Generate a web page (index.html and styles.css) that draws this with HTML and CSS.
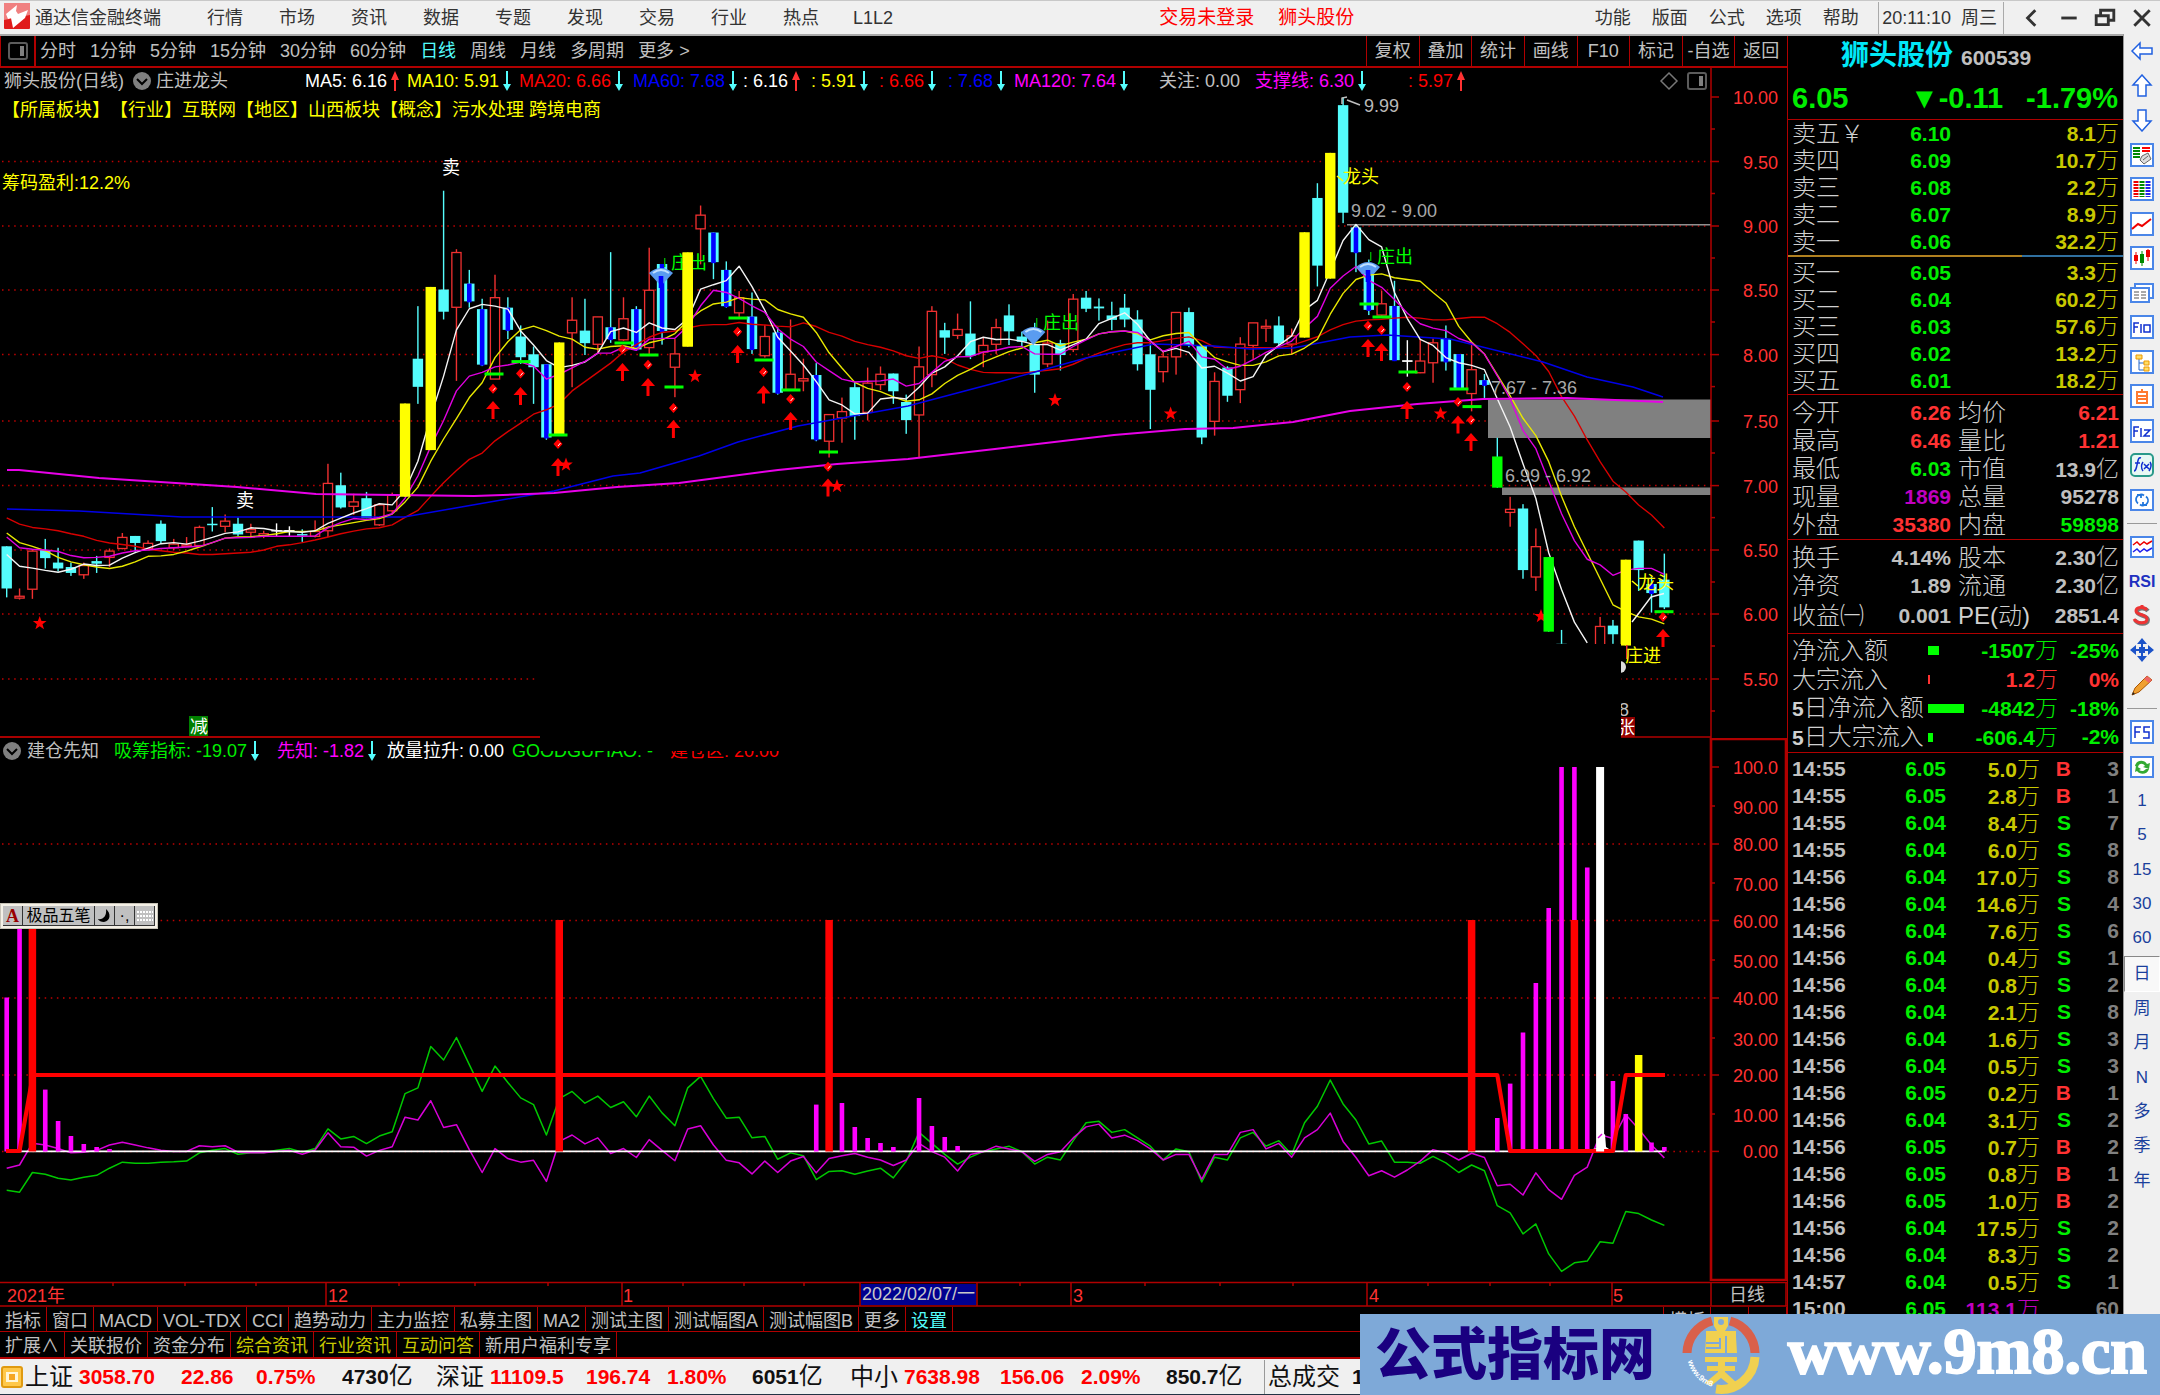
FILE: index.html
```html
<!DOCTYPE html>
<html lang="zh-CN">
<head>
<meta charset="utf-8">
<title>通达信金融终端</title>
<link rel="stylesheet" href="styles.css">
</head>
<body>
<svg class="defs" aria-hidden="true">
  <symbol id="up" viewBox="0 0 10 22"><path d="M5 1l4 9H6v11H4V10H1z" fill="#ff3232"/></symbol>
  <symbol id="down" viewBox="0 0 10 22"><path d="M5 21l4-7H6V1H4v13H1z" fill="#54fcfc"/></symbol>
  <symbol id="chev" viewBox="0 0 20 20"><circle cx="10" cy="10" r="9" fill="#808080"/><path d="M5 8l5 5 5-5" fill="none" stroke="#000" stroke-width="2"/></symbol>
  <symbol id="pane" viewBox="0 0 20 18"><rect x="1" y="1" width="18" height="16" rx="2" fill="none" stroke="#5c5c5c" stroke-width="2"/><rect x="12" y="4" width="4" height="10" fill="#808080"/></symbol>
</svg>

<header class="titlebar">
  <svg class="logo" viewBox="0 0 26 26"><rect width="26" height="26" rx="1" fill="#e01b1b"/><path d="M0 0h26v12L0 17z" fill="#f08080"/><path d="M13 2L2 11l2 5 3-1 2 10 12-10 3-8-10 4-2-3z" fill="#fff"/></svg>
  <h1>通达信金融终端</h1>
  <nav class="menu">
    <button>行情</button><button>市场</button><button>资讯</button><button>数据</button><button>专题</button><button>发现</button><button>交易</button><button>行业</button><button>热点</button><button>L1L2</button>
  </nav>
  <div class="login"><a href="#">交易未登录</a><a href="#">狮头股份</a></div>
  <nav class="menu menu-r"><button>功能</button><button>版面</button><button>公式</button><button>选项</button><button>帮助</button></nav>
  <div class="clock"><span>20:11:10</span><span>周三</span></div>
  <div class="win">
    <button aria-label="收起"><svg viewBox="0 0 20 20"><path d="M13 3L6 10l7 7"/></svg></button>
    <button aria-label="最小化"><svg viewBox="0 0 20 20"><path d="M3 10h14"/></svg></button>
    <button aria-label="还原"><svg viewBox="0 0 20 20"><path d="M2 8h11v8H2zM6 7V3h12v9h-4"/></svg></button>
    <button aria-label="关闭"><svg viewBox="0 0 20 20"><path d="M3 3l14 14M17 3L3 17"/></svg></button>
  </div>
</header>

<main class="work">
  <section class="left">
    <div class="toolbar">
      <button class="pane" aria-label="侧栏"><svg viewBox="0 0 20 18"><use href="#pane"/></svg></button>
      <div class="periods">
        <button>分时</button><button>1分钟</button><button>5分钟</button><button>15分钟</button><button>30分钟</button><button>60分钟</button><button class="on">日线</button><button>周线</button><button>月线</button><button>多周期</button><button>更多 &gt;</button>
      </div>
      <div class="tools"><button>复权</button><button>叠加</button><button>统计</button><button>画线</button><button>F10</button><button>标记</button><button>-自选</button><button>返回</button></div>
    </div>

    <div class="chart">
      <svg id="kline" viewBox="0 68 1787 670" role="img" aria-label="狮头股份日线"></svg>
      <div class="notes">
        <div class="info">
          <span class="name">狮头股份(日线)<svg class="chev"><use href="#chev"/></svg>庄进龙头</span>
          <span class="white">MA5: 6.16<svg><use href="#up"/></svg></span>
          <span class="yellow">MA10: 5.91<svg><use href="#down"/></svg></span>
          <span class="red">MA20: 6.66<svg><use href="#down"/></svg></span>
          <span class="blue">MA60: 7.68<svg><use href="#down"/></svg></span>
          <span class="white">: 6.16<svg><use href="#up"/></svg></span>
          <span class="yellow">: 5.91<svg><use href="#down"/></svg></span>
          <span class="red">: 6.66<svg><use href="#down"/></svg></span>
          <span class="blue">: 7.68<svg><use href="#down"/></svg></span>
          <span class="mag">MA120: 7.64<svg><use href="#down"/></svg></span>
          <span>关注: 0.00</span>
          <span class="mag">支撑线: 6.30<svg><use href="#down"/></svg></span>
          <span class="red">: 5.97<svg><use href="#up"/></svg></span>
          <span class="corner"><svg class="dia" viewBox="0 0 20 20"><path d="M10 2l8 8-8 8-8-8z"/></svg><svg class="pn"><use href="#pane"/></svg></span>
        </div>
        <p class="yellow">【所属板块】【行业】互联网【地区】山西板块【概念】污水处理 跨境电商</p>
        <p class="yellow chips">筹码盈利:12.2%</p>
      </div>
    </div>

    <div class="chart">
      <svg id="osc" viewBox="0 738 1787 543" role="img" aria-label="建仓先知"></svg>
      <div class="notes">
        <div class="info2">
          <span class="name"><svg class="chev"><use href="#chev"/></svg>建仓先知</span>
          <span class="green">吸筹指标: -19.07<svg><use href="#down"/></svg></span>
          <span class="mag">先知: -1.82<svg><use href="#down"/></svg></span>
          <span class="white">放量拉升: 0.00</span>
          <span class="green">GOODGUPIAO: -</span>
          <span class="red">建仓区: 20.00</span>
        </div>
      </div>
      <div class="shade"></div>
      <div class="ime">
        <button class="a">A</button><button class="t">极品五笔</button><button aria-label="半角"><svg viewBox="0 0 16 16"><path d="M9 1c5 4 5 12-2 13-3 0-5-1-6-3 5 1 9-3 8-10z"/></svg></button><button>·,</button><button aria-label="软键盘"><svg viewBox="0 0 16 16"><path d="M0 4h16M0 8h16M0 12h16" stroke="#fff" stroke-width="2" stroke-dasharray="2 1"/></svg></button>
      </div>
    </div>

    <svg id="dates" class="dates" viewBox="0 1281 1787 26" role="img" aria-label="日期轴"></svg>

    <div class="tabs">
      <button>指标</button><button>窗口</button><button>MACD</button><button>VOL-TDX</button><button>CCI</button><button>趋势动力</button><button>主力监控</button><button>私募主图</button><button>MA2</button><button>测试主图</button><button>测试幅图A</button><button>测试幅图B</button><button>更多</button><button class="on">设置</button>
      <div class="tpl"><button>模板</button><button>+</button><button>-</button></div>
    </div>
    <div class="tabs">
      <button>扩展∧</button><button>关联报价</button><button>资金分布</button><button class="hot">综合资讯</button><button class="hot">行业资讯</button><button class="hot">互动问答</button><button>新用户福利专享</button>
    </div>
  </section>

  <aside class="quote">
    <div class="head">
      <div class="title"><h2>狮头股份</h2><span>600539</span></div>
      <div class="price"><span>6.05</span><span>▼-0.11</span><span>-1.79%</span></div>
    </div>
    <table class="book" id="sell"></table>
    <div class="ratio"></div>
    <table class="book buy" id="buy"></table>
    <table class="stats" id="stats"></table>
    <table class="stats last" id="stats2"></table>
    <table class="flow" id="flow"></table>
    <table class="ticks" id="ticks"></table>
  </aside>

  <nav class="side">
    <div class="grp g14">
      <button aria-label="后退"><svg viewBox="0 0 24 24"><path class="ar" d="M2 12l8-8v5h12v6H10v5z"/></svg></button>
      <button aria-label="上"><svg viewBox="0 0 24 24"><path class="ar" d="M12 1l9 10h-5v11H8V11H3z"/></svg></button>
      <button aria-label="下"><svg viewBox="0 0 24 24"><path class="ar" d="M12 23l9-10h-5V2H8v11H3z"/></svg></button>
      <button aria-label="报价"><svg viewBox="0 0 24 24"><path class="bx" d="M1 1h22v22H1z"/><path d="M3 5h7M3 8h7M3 11h7M3 14h7" stroke="#080" stroke-width="2"/><path d="M12 5h8M12 8h8" stroke="#f00" stroke-width="2"/><path d="M10 17l4 4 7-5-3-6-6 3zM13 17l5-4" fill="#ddd" stroke="#666"/></svg></button>
      <button aria-label="列表"><svg viewBox="0 0 24 24"><path class="bx" d="M1 1h22v22H1z"/><g stroke-width="5" stroke-dasharray="2 1"><path d="M6 4v16" stroke="#e00"/><path d="M12 4v16" stroke="#080"/><path d="M18 4v16" stroke="#22e"/></g></svg></button>
      <button aria-label="走势"><svg viewBox="0 0 24 24"><path class="bx" d="M1 1h22v22H1z"/><path d="M2 17l6-5 4 2 9-7" stroke="#e00" stroke-width="2" fill="none"/></svg></button>
      <button aria-label="K线"><svg viewBox="0 0 24 24"><path class="bx" d="M1 1h22v22H1z"/><path d="M6 6v12M18 3v12" stroke="#e00"/><path d="M4 9h4v6H4zM16 4h4v7h-4z" fill="#e00"/><path d="M12 5v15" stroke="#080"/><path d="M10 8h4v9h-4z" fill="#080"/></svg></button>
      <button aria-label="多窗"><svg viewBox="0 0 24 24"><path class="bx" d="M5 3h18v14H5z"/><path class="bx" d="M1 7h18v14H1z"/><path d="M4 11h5M4 14h5M4 17h5M11 11h5M11 14h5M11 17h5" stroke="#555"/></svg></button>
      <button aria-label="F10"><svg viewBox="0 0 24 24"><path class="bx" d="M1 1h22v22H1z"/><path class="gl" d="M4 18V8h5M4 12h4M11 9v9M14 10h6v7h-6z"/></svg></button>
      <button aria-label="树"><svg viewBox="0 0 24 24"><path class="bx" d="M1 1h22v22H1z"/><path d="M9 8v12h6M9 13h6" stroke="#26c" fill="none"/><path d="M6 5h6v4H6zM14 11h5v4h-5zM14 17h5v4h-5z" fill="#fd6" stroke="#e90"/></svg></button>
      <button aria-label="自选"><svg viewBox="0 0 24 24"><path class="bx" d="M1 1h22v22H1z"/><path d="M7 8h10v11H7zM7 12h10M7 15h10M12 8V5" stroke="#ff7a30" stroke-width="2" fill="#fff"/></svg></button>
      <button aria-label="F12"><svg viewBox="0 0 24 24"><path class="bx" d="M1 1h22v22H1z"/><path class="gl" d="M4 18V8h5M4 12h4M11 9v9M14 11h6l-6 6h6"/></svg></button>
      <button aria-label="公式"><svg viewBox="0 0 24 24"><rect class="bx2" x="1" y="1" width="22" height="22" rx="4"/><path class="gl" d="M11 5c-3-1-3 3-4 7s-1 6-3 6M5 10h5M13 9c-2 3-2 6 0 9M20 9c2 3 1 6-1 9M14 11l5 5M19 11l-5 5"/></svg></button>
      <button aria-label="循环"><svg viewBox="0 0 24 24"><path class="bx" d="M1 2h22v20H1z"/><path d="M8 15.500a5 5 0 0 1 6-8M16 8.500a5 5 0 0 1-6 8M7 7h4v3M17 17h-4v-3" stroke="#27d" stroke-width="1.800" fill="none"/></svg></button>
    </div>
    <hr>
    <div class="grp g5">
      <button aria-label="叠线"><svg viewBox="0 0 24 24"><path class="bx" d="M1 2h22v20H1z"/><path d="M3 10l4-3 3 3 4-3 3 2 5-3" stroke="#e00" fill="none" stroke-width="1.500"/><path d="M3 17l4-3 3 3 4-3 3 2 5-3" stroke="#22e" fill="none" stroke-width="1.500"/></svg></button>
      <button class="rsi">RSI</button>
      <button aria-label="资金"><svg viewBox="0 0 24 24"><path d="M18 7c-3-4-11-3-11 1s11 3 11 8-10 5-13 0" stroke="#777" stroke-width="4" fill="none"/><path d="M17 6c-3-4-11-3-11 1s11 3 11 8-10 5-13 0M12 1v3" stroke="#e33" stroke-width="3" fill="none"/></svg></button>
      <button aria-label="移动"><svg viewBox="0 0 24 24"><path d="M12 0l5 6H7zM12 24l5-6H7zM0 12l6-5v10zM24 12l-6-5v10zM9 9h6v6H9z" fill="#1c53c8"/><path d="M12 5v14M5 12h14" stroke="#1c53c8" stroke-width="2"/></svg></button>
      <button aria-label="画笔"><svg viewBox="0 0 24 24"><path d="M2 22l3-7L17 3l5 4L9 19z" fill="#f0a030" stroke="#a50"/><path d="M17 3l5 4-3 3-5-4z" fill="#e66"/><path d="M2 22l3-1-2-2z" fill="#222"/></svg></button>
    </div>
    <hr>
    <div class="grp g14">
      <button aria-label="F5"><svg viewBox="0 0 24 24"><path class="bx" d="M1 1h22v22H1z"/><path class="gl" d="M5 18V7h6M5 12h5M20 7h-6v5h5v6h-6"/></svg></button>
      <button aria-label="刷新"><svg viewBox="0 0 24 24"><path class="bx" d="M1 2h22v20H1z"/><path d="M5 11c1-6 9-7 12-2l3-1-1 6-6-2 2-1c-2-3-6-3-7 1zM19 14c-2 6-9 6-12 2l-2 1 1-6 5 3-2 1c3 2 5 1 7-1z" fill="#3a3"/></svg></button>
      <button>1</button><button>5</button><button>15</button><button>30</button><button>60</button><button class="down">日</button><button>周</button><button>月</button><button>N</button><button>多</button><button>季</button><button>年</button>
    </div>
  </nav>
</main>

<footer class="status">
  <svg class="sic" viewBox="0 0 22 22"><rect x="1" y="1" width="20" height="20" rx="2" fill="#ffc84a" stroke="#e09a10" stroke-width="2"/><path d="M5 6h12v10H5z" fill="#fff6d8"/><path d="M8 8h6v6H8z" fill="#f5a623"/></svg>
  <div class="idx first"><span>上证</span><b>3058.70</b><b>22.86</b><b>0.75%</b><em><strong>4730</strong>亿</em></div>
  <div class="idx"><span>深证</span><b>11109.5</b><b>196.74</b><b>1.80%</b><em><strong>6051</strong>亿</em></div>
  <div class="idx"><span>中小</span><b>7638.98</b><b>156.06</b><b>2.09%</b><em><strong>850.7</strong>亿</em></div>
  <div class="total"><span>总成交</span><strong>1</strong></div>
</footer>

<div class="banner">
  <span class="cn">公式指标网</span>
  <svg viewBox="0 0 78 78"><path d="M5 37A34 34 0 0 1 30 5" fill="none" stroke="#d9604a" stroke-width="9"/><path d="M73 37A34 34 0 0 0 48 5" fill="none" stroke="#d9604a" stroke-width="9"/><path d="M73 41A34 34 0 0 1 34 73" fill="none" stroke="#f0d050" stroke-width="9"/><path d="M32 1h14v9l-3 5h11v6l1 16H23l1-16v-6h11l-3-5z" fill="#f0d050"/><circle cx="39" cy="6" r="3" fill="#7ea9d8"/><path d="M24 27h14v-5M38 27v5H24M44 20v17" stroke="#7ea9d8" stroke-width="2" fill="none"/><path d="M23 41h32v5H23zM25 50h28v5H25zM36 44h7v12l12 11-6 3-10-8-10 8-6-3 13-11z" fill="#f0d050"/><path id="arc" d="M6 45A35 35 0 0 0 31 71" fill="none"/><text class="mini"><textPath href="#arc">www.9m8.cn</textPath></text></svg>
  <span class="url">www.9m8.cn</span>
</div>
<script src="app.js"></script>
</body>
</html>
```
FILE: styles.css
```css
* { box-sizing: border-box; }
body {
  margin: 0;
  background: #000;
  color: #c0c0c0;
  font: 400 18px/24px "Liberation Sans", "Noto Sans CJK SC", sans-serif;
  text-spacing-trim: space-all;
  display: flex;
  flex-direction: column;
  min-height: 100vh;
  position: relative;
  overflow-x: hidden;
}
button {
  font: inherit;
  color: inherit;
  background: none;
  border: 0;
  padding: 0;
  white-space: nowrap;
}
h1, h2, p { margin: 0; font-size: 18px; font-weight: 400; }
a { color: inherit; text-decoration: none; }
.defs { display: none; }
.white { color: #fff; }
.yellow { color: #ff0; }
.red { color: #f00; }
.blue { color: #00f; }
.mag { color: #f0f; }
.green { color: #0e0; }

/* title bar */
.titlebar {
  height: 36px;
  flex: none;
  display: flex;
  align-items: center;
  background: #f0f0f0;
  border-top: 1px solid #c8c8c8;
  border-bottom: 2px solid #a8a8a8;
  color: #333;
  padding-left: 4px;
  white-space: nowrap;
}
.logo { width: 26px; height: 26px; margin-bottom: 4px; }
.titlebar h1 { margin: 0 28px 0 5px; }
.menu { display: flex; }
.menu button { width: 72px; }
.login { color: #f00; font-size: 19px; display: flex; gap: 24px; margin-left: auto; }
.menu-r { margin-left: 230px; }
.menu-r button { width: 57px; }
.clock {
  border: solid #aaa;
  border-width: 0 1px;
  height: 32px;
  display: flex;
  align-items: center;
  gap: 10px;
  padding: 0 6px 0 3px;
  margin-left: 9px;
}
.win { display: flex; width: 156px; padding-left: 10px; justify-content: space-around; }
.win svg { width: 22px; height: 22px; display: block; fill: none; stroke: #333; stroke-width: 2.6; }

/* work area */
.work { display: grid; grid-template-columns: minmax(0, 1fr) 336px 37px; flex: 1; }
.left { min-width: 0; }
.toolbar {
  height: 32px;
  display: flex;
  align-items: stretch;
  border-bottom: 2px solid #b00000;
}
.pane { width: 36px; border: solid #b00000; border-width: 0 2px 0 1px; }
.pane svg { width: 20px; height: 18px; display: block; margin: auto; }
.periods { display: flex; gap: 14px; padding-left: 4px; }
.on { color: #54fcfc; }
.tools { margin-left: auto; width: 421px; display: flex; }
.tools button { flex: 1; border-left: 1px solid #b00000; }

.chart { display: grid; position: relative; }
.chart > svg, .notes { grid-area: 1 / 1; }
.chart > svg, .dates { display: block; width: 100%; height: auto; }
.notes { position: relative; z-index: 2; white-space: nowrap; }
.info, .info2 { display: grid; height: 26px; align-items: center; }
.info { grid-template-columns: 305px 102px 112px 114px 110px 68px 68px 69px 66px 145px 96px 153px 251px 1fr; }
.info2 { grid-template-columns: 114px 163px 110px 125px 158px 1fr; }
.info span, .info2 span { display: flex; align-items: center; }
.info svg, .info2 svg { width: 10px; height: 22px; margin-left: 3px; }
.info .name, .info2 .name { padding-left: 4px; }
.info2 .name { padding-left: 1px; }
.notes .chev { width: 20px; height: 20px; margin: 0 4px 0 8px; }
.info2 .name .chev { margin: 0 5px 0 1px; }
.info .corner svg { width: 20px; height: 20px; margin: 0 8px 0 0; }
.dia { fill: none; stroke: #777; stroke-width: 1.5; }
.notes p { padding: 4px 0 0 2px; }
.notes .chips { padding-top: 49px; }
.shade {
  position: absolute;
  z-index: 3;
  left: 30.2%;
  right: 9.3%;
  top: -94px;
  height: 107px;
  background: #000;
}
.ime {
  position: absolute;
  z-index: 4;
  left: 0;
  top: 165px;
  width: 158px;
  height: 26px;
  padding: 2px;
  display: flex;
  background: #f4f0e6;
  border: 1px solid #c8c4b8;
  color: #000;
  font-size: 16px;
  line-height: 20px;
}
.ime button { flex: 1; background: #c0c0c0; border-right: 1px solid #333; border-bottom: 1px solid #333; }
.ime .t { flex: 0 0 72px; }
.ime .a { font-family: "Liberation Serif", serif; font-weight: 700; color: #900; font-size: 18px; }
.ime svg { width: 16px; height: 16px; display: block; margin: auto; }

/* svg text */
svg text { font: 400 18px "Liberation Sans", "Noto Sans CJK SC", sans-serif; }
svg .ax { fill: #ff3232; text-anchor: end; }

.tabs { height: 25px; display: flex; border-bottom: 1px solid #b00000; }
.tabs + .tabs { height: 27px; border-bottom-width: 2px; }
.tabs button { border-right: 1px solid #b00000; padding: 2px 5px 0; }
.tpl { margin-left: auto; display: flex; border-left: 1px solid #b00000; }
.tpl button { min-width: 38px; }
.hot { color: #c8c800; }

/* quote panel */
.quote {
  border-left: 1px solid #b00000;
  font-size: 21px;
  font-weight: 700;
  min-width: 0;
}
.head { height: 84px; border-bottom: 1px solid #b00000; }
.title { display: flex; align-items: baseline; gap: 8px; padding: 2px 0 0 53px; line-height: 36px; }
.title h2 { font-size: 28px; font-weight: 700; color: #00e8f8; }
.price { display: grid; grid-template-columns: 118px auto 1fr; padding: 4px 5px 0 4px; font-size: 29px; line-height: 36px; color: #0e0; }
.price span:last-child { text-align: right; }
.quote table { width: 100%; border-collapse: collapse; table-layout: fixed; }
.quote td, .quote th { padding: 0; text-align: right; height: 27px; line-height: 26px; white-space: nowrap; font-weight: 700; }
.quote th { text-align: left; font-weight: 300; font-size: 24px; padding-left: 4px; color: #d0d0d0; }
.quote i { font-style: normal; font-weight: 300; font-size: 23px; }
.quote .up { color: #ff3232; }
.quote .dn { color: #0e0; }
.vol { color: #c8c800; }
.pu { color: #c000c0; }
.mute { color: #808080; }
.c1 { width: 80px; } .c2 { width: 83px; } .c3 { width: 80px; } .c0 { width: 4px; }
.quote .lab2 { padding-left: 7px; }
.book .p { width: 83px; }
.ratio { height: 2px; background: linear-gradient(90deg, #b08020 70%, #3070a0 70%); }
.quote .buy { margin: 2px 0 0; }
.buy, .stats, .flow { border-bottom: 1px solid #b00000; }
.quote .stats td, .quote .stats th { height: 28px; }
.quote .flow td, .quote .flow th { height: 29px; }
.stats { margin-top: 4px; }
.stats.last tr:last-child td, .stats.last tr:last-child th { height: 34px; }
.flow { margin-top: 2px; }
.flow svg { display: block; width: 40px; height: 9px; }
.flow .lead { font-weight: 700; font-size: 21px; }
.f1 { width: 140px; } .f2 { width: 40px; } .f3 { width: 90px; }
.t2 { width: 78px; } .t3 { width: 94px; } .t4 { width: 31px; }
.quote .ticks { margin-top: 3px; }
.quote .ticks th { font-weight: 700; font-size: 21px; color: #c0c0c0; }

/* side tool strip */
.side { background: #f0f0f0; color: #1a3f9c; border-left: 1px solid #999; font-size: 17px; margin-top: -2px; }
.grp { display: flex; flex-direction: column; }
.g14 { height: 483px; }
.g5 { height: 172px; }
.grp button { flex: 1; min-height: 0; }
.grp svg { width: 24px; height: 24px; display: block; margin: auto; }
.side hr { border: 0; border-top: 1px solid #999; margin: 6px 3px; }
.ar { fill: #fff; stroke: #2060e0; stroke-width: 1.5; }
.bx { fill: #fff; stroke: #4a86e8; stroke-width: 2; }
.bx2 { fill: #e8f8f4; stroke: #2a9a8a; stroke-width: 2; }
.gl { fill: none; stroke: #1030d0; stroke-width: 1.5; }
.side .rsi { font-weight: 700; font-size: 16px; color: #2030c0; }
.side .down { border: 1px solid #999; border-color: #888 #fff #fff #888; background: #f8f8f8; }

/* status bar */
.status {
  height: 36px;
  flex: none;
  background: #f0f0f0;
  border-bottom: 1px solid #234;
  display: flex;
  align-items: center;
  color: #111;
  font-size: 24px;
  white-space: nowrap;
  overflow: hidden;
}
.sic { width: 22px; height: 22px; margin: 0 2px 0 1px; flex: none; }
.idx { display: grid; grid-template-columns: 54px 96px 81px 85px 98px; align-items: center; flex: none; }
.idx.first { grid-template-columns: 54px 102px 75px 86px 94px; }
.status b { font-size: 21px; font-weight: 700; color: #f00; }
.status strong { font-size: 21px; font-weight: 700; }
.status em { font-style: normal; }
.total { border-left: 1px solid #999; padding-left: 3px; line-height: 34px; display: flex; gap: 12px; }

/* site banner */
.banner {
  position: absolute;
  z-index: 9;
  right: 0;
  bottom: 0;
  width: 800px;
  height: 81px;
  background: #7ea9d8;
  display: flex;
  align-items: center;
  padding: 0 13px 0 15px;
  justify-content: space-between;
}
.cn { color: #1a0080; font-size: 56px; font-weight: 900; line-height: 80px; }
.banner svg { width: 78px; height: 78px; }
.url { font: 700 66px/70px "Liberation Serif", serif; color: #fff; -webkit-text-stroke: 2px #fff; padding-bottom: 8px; }
svg .mini { font: 700 8px "Liberation Sans", sans-serif; fill: #fff; }
```
FILE: app.js
```js
const NS = 'http://www.w3.org/2000/svg';
const $ = id => document.getElementById(id);
const X = i => 6.7 + 12.85 * i;
let out = [];
const rect = (x, y, w, h, f, extra = '') => out.push(`<rect x="${x}" y="${y}" width="${w}" height="${h}" fill="${f}" ${extra}/>`);
const line = (x1, y1, x2, y2, c, w = 1, extra = '') => out.push(`<path d="M${x1} ${y1}L${x2} ${y2}" stroke="${c}" stroke-width="${w}" fill="none" ${extra}/>`);
const text = (x, y, s, c, extra = '') => out.push(`<text x="${x}" y="${y}" fill="${c}" ${extra}>${s}</text>`);
const poly = (pts, c, w) => out.push(`<polyline points="${pts.map(p => p.join()).join(' ')}" fill="none" stroke="${c}" stroke-width="${w}" stroke-linejoin="round"/>`);
const RED = '#b00000', CY = '#54fcfc';
const dotted = (y, x1, x2) => line(x1, y, x2, y, '#c00000', 1.5, 'stroke-dasharray="1.5 4.6"');

/* Series are stored in blocks; each block has its first bar, base line and unit height. */
const A = [0, 180, 0.37], B = [48, 180, 0.37], C = [94, 80, 0.4337];
const join = (...blocks) => {
  const r = [];
  for (const [[first, base, unit], ys] of blocks) ys.forEach((y, k) => r.push([X(first + k), base + y * unit]));
  return r;
};

/* kind, high, top, bottom, low */
const candles = [
[A, `c 990 990 1104 1128|r 1104 1125 1130 1134|r 998 1003 1106 1132|c 970 1000 1022 1050|c 994 1034 1050 1058|c 1034 1046 1062 1070|r 1034 1042 1067 1078|c 1016 1030 1037 1062|r 996 1003 1020 1046|r 954 966 996 998|c 962 962 981 1005|r 974 982 996 998|c 920 929 976 984|r 970 984 994 1000|r 965 986 990 992|r 934 939 988 990|c 884 929 933 950|r 904 922 936 952|c 912 929 958 962|r 929 945 952 968|r 948 956 962 968|w 928 946 950 962|w 936 946 950 962|c 944 957 961 978|r 920 950 963 966|r 767 820 948 965|c 791 825 885 888|r 848 870 882 905|c 843 860 914 914|r 875 878 932 935|r 845 852 894 900|y 604 604 856 856|c 341 483 559 605|y 289 289 730 730|c 29 296 356 377|r 187 196 344 543|b 243 280 328 345|b 321 349 499 503|r 256 318 538 538|b 317 345 405 430|c 393 423 479 497|c 450 471 506 605|b 498 498 696 702|y 439 439 688 688|r 317 379 413 560|c 321 407 441 473|r 370 370 444 470|b 195 398 430 440`],
[B, `r 317 375 432 435|b 341 349 458 462|r 183 298 453 470|b 227 227 408 445|r 430 470 506 587|y 196 196 450 450|r 69 95 132 228|b 142 142 222 268|b 220 243 341 345|r 300 318 359 375|b 304 369 457 470|r 392 423 475 480|b 398 412 575 580|r 377 525 566 566|r 483 537 543 571|b 495 527 701 706|r 634 634 706 750|r 588 626 643 710|c 545 560 638 702|r 507 549 628 650|r 504 525 553 568|c 523 523 571 605|c 580 600 649 686|r 450 505 635 752|r 341 355 526 560|c 386 406 426 470|r 361 404 420 430|c 328 415 475 484|r 424 447 465 506|r 375 399 444 470|c 336 366 409 446|c 410 423 437 450|c 386 446 526 575|r 380 441 497 506|c 432 441 473 515|r 308 322 458 465|c 300 318 348 357|c 320 342 347 380|c 329 366 378 406|c 308 345 377 398|c 352 377 498 515|c 441 471 567 673|r 460 478 518 547|r 358 358 478 526|c 345 357 446 452|c 446 446 696 714`],
[C, `r 674 695 787 820|c 660 663 728 742|r 593 609 714 745|r 560 560 612 644|r 552 568 572 604|c 545 566 607 612|r 573 590 609 634|y 351 351 594 594|c 238 272 428 476|y 168 168 458 458|c 40 58 306 330|b 333 340 397 443|b 414 435 530 542|r 486 516 542 546|b 463 521 646 648|w 600 646 650 684|r 597 648 675 676|r 596 606 652 698|b 566 597 649 670|b 632 632 710 714|r 610 668 723 764|b 678 692 703 733|g 825 868 940 940|r 961 990 997 1030|c 978 988 1130 1150|r 1034 1076 1146 1178|g 1100 1100 1272 1272|c 1268 1300 1300 1300|n 0 0 0 0|n 0 0 0 0|r 1238 1260 1302 1302|c 1245 1258 1278 1300|y 1106 1106 1304 1304|c 1062 1062 1130 1178|b 1145 1162 1183 1228|c 1092 1152 1216 1220`]
];
const bars = [];
candles.forEach(([[first, base, unit], src]) => src.split('|').forEach((r, k) => {
  const p = r.split(' ');
  if (p[0] !== 'n') bars.push([first + k, p[0], ...p.slice(1).map(v => base + v * unit)]);
}));
function drawBar([i, k, hi, top, bot, lo]) {
  const x = X(i), col = { c: CY, b: CY, r: '#f03030', y: '#ff0', g: '#0f0', w: '#fff' }[k];
  const h = Math.max(1.5, bot - top);
  rect(x - 0.7, hi, 1.4, lo - hi, k === 'g' ? CY : col);
  if (k === 'r') out.push(`<rect x="${x - 4.6}" y="${top}" width="9.2" height="${h}" fill="#000" stroke="${col}" stroke-width="1.3"/>`);
  else rect(x - 5.2, top, 10.4, h, col);
  if (k === 'b') rect(x - 2.3, top, 4.6, h + 1, '#00f');
}

const N = s => s.split(',').map(Number);
const ma = {
  white: join([A, N('1012,1044,1049,1055,1060,1052,1038,1042,1041,1022,1007,995,983,980,984,976,966,955,951,940,942,948,950,952,948,928,914,900,888,875,878,838,760,640,530,405,348,336,341,349,408,446,488,507,501,492,468,410')],
    [B, N('400,412,386,400,404,375,295,283,272,233,288,352,425,462,500,545,594,608,632,630,592,588,592,560,522,505,475,437,425,431,430,436,445,445,460,445,430,388,374,359,390,435,464,455,466,508')],
    [C, N('660,676,694,684,635,612,590,530,508,440,370,333,368,385,490,550,598,612,640,652,658,668,735,800,885,965,1090,1175,1250,1298')]),
  yellow: join([A, N('954,980,990,1002,1020,1032,1040,1046,1050,1044,1032,1017,1016,1012,1003,992,980,968,965,964,961,956,950,950,949,938,932,926,920,915,903,870,830,760,700,645,588,548,480,437,405,395,407,422,430,452,457,450')],
    [B, N('448,456,440,432,415,380,354,335,330,318,322,324,350,362,371,412,467,508,547,563,572,586,598,594,578,550,528,512,492,478,464,454,440,433,448,438,430,416,410,408,416,432,421,415,412,448')],
    [C, N('640,650,658,658,650,636,632,618,598,540,492,460,450,447,456,460,464,490,514,568,604,632,680,728,780,820,880,960,1030,1090,1150,1210,1225,1238,1243,1254')]),
  mag: join([A, N('965,994,998,1000,1004,1015,1021,1020,1017,1008,1002,1000,996,994,992,990,980,968,967,966,963,963,963,963,962,940,926,915,918,912,902,860,800,720,650,570,530,520,505,500,492,503,538,525,508,490,468,468')],
    [B, N('452,460,430,428,428,395,340,298,304,320,340,358,402,430,450,492,515,538,546,544,543,538,557,550,520,490,478,477,465,460,452,450,470,471,471,450,432,416,410,408,412,436,463,450,436,478')],
    [C, N('644,667,660,645,628,615,602,572,545,480,452,430,462,478,506,538,562,572,578,596,606,632,682,735,808,850,925,1000,1062,1105,1118,1142,1130,1126,1126,1140')]),
  red: join([A, N('913,930,939,943,948,956,963,974,981,985,990,998,1002,1006,1008,1012,1012,1010,1008,1006,1000,990,986,980,973,965,956,949,943,940,932,912,893,855,818,785,755,738,705,680,657,633,621,605,570,545,520,495')],
    [B, N('465,445,425,412,408,400,393,391,391,385,390,392,395,397,386,396,412,422,436,445,452,462,475,482,475,482,500,512,520,521,521,522,518,514,510,498,482,468,455,445,440,440,434,428,424,434')],
    [C, N('616,617,617,617,617,618,612,602,592,576,564,556,553,552,549,547,549,553,553,550,547,547,562,582,608,635,672,730,775,830,880,925,950,980,1003,1033')])
};
const blue = [[7,509],[79,511],[182,517],[285,517],[404,517],[467,506],[554,491],[613,476],[640,473],[699,456],[738,442],[798,426],[908,406],[995,383],[1086,358],[1154,344],[1214,346],[1250,349],[1293,348],[1350,337],[1387,335],[1450,339],[1543,362],[1587,377],[1633,387],[1663,397]];
const ma120 = [[7,470],[19,470],[99,478],[237,487],[316,494],[474,496],[554,493],[617,487],[679,483],[778,470],[837,464],[908,459],[995,449],[1114,435],[1185,429],[1233,428],[1293,422],[1350,411],[1417,404],[1483,399],[1567,398],[1663,402]];

/* price chart */
const grid = [161.5, 226, 290, 354.6, 421, 485.6, 550, 614, 679];
grid.forEach(y => dotted(y, 2, y === 679 ? 538 : 1711));
dotted(679, 1620, 1711);
rect(1488, 399.5, 223, 38.5, '#808080');
rect(1502, 487.5, 209, 7.5, '#808080');
rect(1347, 224, 364, 1.5, '#909090');
bars.filter(b => !'yg'.includes(b[1])).forEach(drawBar);
poly(ma.red, '#d80000', 1.4);
poly(blue, '#0000e8', 1.5);
poly(ma.yellow, '#e8e800', 1.4);
poly(ma.white, '#f4f4f4', 1.4);
poly(ma.mag, '#e000e0', 1.4);
poly(ma120, '#e800e8', 2);
[[39.7,623],[566,464.5],[695,376],[837,486],[1055,400],[1170.6,413.6],[1440.6,413.6],[1541,616]].forEach(([x, y]) => out.push(`<path d="M${x} ${y - 7}l1.8 5h5l-4 3.2 1.5 5-4.3-3-4.3 3 1.5-5-4-3.2h5z" fill="#f00"/>`));
bars.filter(b => 'yg'.includes(b[1])).forEach(drawBar);
poly([[1632, 622], [1639, 613], [1651, 597], [1664, 593.5]], '#f4f4f4', 1.4);
rect(1626, 645, 1.5, 14, '#f03030');
[[494,374],[521,361.6],[558,435],[624,343],[649,355],[674,387],[738,318],[764,360],[791,390],[828.5,452],[1369,304],[1382,317],[1408,372],[1459,389],[1472,406.6],[1664,611.7]].forEach(([x, y]) => rect(x - 9.5, y - 1.5, 19, 3, '#0f0'));
[[493,388.7],[520.5,373.6],[558,444],[622.5,349.5],[648,364.7],[673.4,408],[737.6,331.7],[763.5,372],[790.6,399],[828,466.7],[1368,325.8],[1381.5,330],[1407,387],[1458,402],[1471,420],[1663,617]].forEach(([x, y]) => {
  out.push(`<path d="M${x} ${y - 5}l4.5 5-4.5 5-4.5-5z" fill="#f00"/>`);
  line(x, y + 2, x + 2.5, y - 1, '#fff', 1);
});
[[493,410],[520.5,396],[558,467],[622.5,372],[648,387],[673.4,429],[737.6,354],[763.5,394.6],[790.6,421],[828,487.6],[1368,348],[1381.5,352],[1407,410],[1458,424.6],[1471,442],[1663,638]].forEach(([x, y]) => out.push(`<path d="M${x} ${y - 9}l7 8h-5.5v10h-3v-10h-5.5z" fill="#f00"/>`));
[[661,272],[1033.4,331],[1368,266]].forEach(([x, y], k) => {
  out.push(`<path d="M${x - 12} ${y + 1}q12-10 24 0l-${k === 2 ? 6 : 12} ${k === 2 ? 7 : 13}${k === 2 ? 'h-12' : ''}z" fill="#5a9cf0"/><path d="M${x - 8} ${y + 1}q8-6 16 0" stroke="#bfe0ff" stroke-width="2" fill="none"/>`);
  if (k !== 1) rect(x - 2.3, y + 4, 4.6, 12, '#00f');
});
[[671,269],[1043,329],[1377,263]].forEach(([x, y]) => { text(x, y, '庄出', '#0f0'); rect(x - 7, y - 11, 1.4, 9, '#0a0'); });
rect(682.5, 252.5, 10.4, 94, '#ff0');
text(1343, 183, '龙头', '#ff0'); line(1337, 176, 1343, 181, '#ff0', 1.5);
text(1638, 589, '龙头', '#ff0'); line(1632, 581, 1638, 586, '#ff0', 1.5);
text(1625, 662, '庄进', '#ff0');
text(1364, 112, '9.99', '#b8b8b8');
out.push('<path d="M1342 104v-6l5-1M1347 100l13 5" stroke="#c0c0c0" fill="none" stroke-width="1.5"/>');
text(1351, 217, '9.02 - 9.00', '#a8a8a8');
text(1491, 394, '7.67 - 7.36', '#a8a8a8');
text(1505, 482, '6.99 - 6.92', '#a8a8a8');
text(442, 174, '卖', '#fff'); text(236, 507, '卖', '#fff');
rect(189, 716, 19, 20, '#008000'); text(190, 733, '减', '#fff');
rect(1620, 717, 15, 20, '#900000'); text(1617, 734, '张', '#fff'); text(1619, 716, '8', '#c0c0c0');
rect(1606, 644, 14, 93, '#000');
out.push('<path d="M1620 661a6 6 0 0 1 0 12z" fill="#ddd"/>');
line(0, 737, 541, 737, '#e00000', 1.5);
line(1620, 737, 1711, 737, RED, 1.5);
line(1711, 68, 1711, 738, RED, 1.5);
['10.00','9.50','9.00','8.50','8.00','7.50','7.00','6.50','6.00','5.50'].forEach((t, k) => {
  const y = k ? grid[k - 1] : 97;
  line(1711, y, 1719, y, RED, 1.5);
  line(1711, y + 32, 1715, y + 32, RED, 1.5);
  text(1778, y + 7, t, '#ff3232', 'class="ax"');
});
$('kline').innerHTML = out.join('');

/* oscillator */
out = [];
const D = [0, 720, 1 / 2.8], E = [67, 0, 1.3776], F = [104, 720, 1 / 2.8];
[844, 920.5, 998, 1075, 1151.4].forEach(y => dotted(y, 2, 1711));
const green = join([D, N('1317,1322,1267,1272,1283,1288,1280,1275,1255,1238,1241,1241,1238,1237,1235,1212,1205,1200,1216,1212,1212,1205,1200,1210,1200,1145,1173,1166,1186,1165,1153,1046,1030,914,952,889,965,1040,969,1015,1058,1077,1162,1060,1040,1073,1053,1085,1069,1111,1053,1100,1136,1030,998,1060,1115,1112,1170,1166,1230,1212,1220,1287,1264,1262,1272')],
  [E, N('850,848,855,843,822,830,838,845,840,836,834,832,836,845,840,842,828,815,814,822,820,826,832,842,834,836,858,840,842,826,822,832,828,838,815,803,784')],
  [F, N('1075,1120,1187,1179,1238,1238,1241,1222,1240,1267,1246,1262,1360,1380,1439,1411,1495,1544,1520,1515,1461,1465,1376,1382,1400,1415')]);
const purple = join([D, N('1255,1246,1185,1190,1200,1212,1210,1205,1190,1182,1190,1198,1205,1208,1208,1192,1195,1192,1210,1212,1212,1208,1205,1216,1204,1156,1195,1196,1221,1205,1195,1112,1120,1066,1141,1133,1203,1267,1200,1228,1238,1233,1292,1180,1162,1187,1170,1214,1200,1225,1175,1205,1234,1145,1136,1190,1233,1240,1271,1235,1267,1235,1222,1268,1228,1220,1214')],
  [E, N('840,842,846,842,830,836,840,850,838,836,832,834,836,843,838,836,826,818,816,826,824,828,834,842,838,838,856,838,838,822,820,834,830,840,826,820,808')],
  [F, N('1180,1225,1276,1262,1280,1260,1235,1203,1212,1232,1213,1225,1304,1300,1330,1268,1315,1342,1275,1252,1161,1172,1105,1145,1190,1226')]);
poly(green, '#00c800', 1.5);
poly(purple, '#d800d8', 1.5);
line(7, 1151.4, 1665, 1151.4, '#fff', 1.6);
const stick = (i, y, c = '#f0f', w = 4.6) => rect(X(i) - w / 2, y, w, 1151.5 - y, c);
[[0,997.5],[1,920],[3,1089.6],[4,1121],[5,1136],[6,1144],[7,1147],[8,1149],[63,1104.6],[65,1103],[66,1127],[67,1138],[68,1143],[69,1147],[71,1098],[72,1126],[73,1137],[74,1146],[116,1118],[117,1083.6],[118,1032.5],[119,983],[120,908],[121,767],[122,767],[123,867.5],[125,1081],[126,1114],[128,1142.5],[129,1147]].forEach(a => stick(...a));
stick(127, 1055, '#ff0', 7.5);
poly([[6, 1151], [19.5, 1151], [32, 1080], [32, 1075], [X(116), 1075], [X(117), 1151], [X(125), 1151], [X(126), 1075], [1665, 1075]], '#f00', 4.2);
[2, 43, 64, 114, 122].forEach(i => stick(i, 920, '#f00', 7.5));
stick(124, 767, '#fff', 8);
out.push('<path d="M1593 1149l4-1v-9l8-5 1 13 3 2z" fill="#fff"/>');
line(1598, 1138, 1602, 1134, '#d800d8', 1.5);
line(1711, 738, 1711, 1281, RED, 2.6);
line(1711, 739, 1787, 739, RED, 2.6);
line(1786, 738, 1786, 1281, RED, 2.6);
line(1711, 1280, 1787, 1280, RED, 2.6);
['100.0','90.00','80.00','70.00','60.00','50.00','40.00','30.00','20.00','10.00','0.00'].forEach((t, k) => {
  const y = [767,807,844,884,920.5,961,998,1039,1075,1115,1151.4][k];
  line(1711, k % 2 ? y - 1 : y, k % 2 ? 1715 : 1719, k % 2 ? y - 1 : y, RED, 1.5);
  text(1778, y + 7, t, '#ff3232', 'class="ax"');
});
$('osc').innerHTML = out.join('');

/* date axis */
out = [];
line(0, 1282.5, 1787, 1282.5, RED, 1.5);
line(0, 1306, 1787, 1306, RED, 1.5);
[113,185,256,399,475,548,683,744,804,1020,1145,1220,1293,1428,1490,1550].forEach(x => line(x, 1282, x, 1286, RED, 1.5));
[326, 622, 860, 977, 1071, 1367, 1612, 1711, 1786].forEach(x => line(x, 1282, x, 1306, RED, 1.5));
rect(861, 1284, 115, 21, '#000090');
[[7,'2021年'],[328,'12'],[623,'1'],[1073,'3'],[1369,'4'],[1613,'5']].forEach(([x, t]) => text(x, 1302, t, '#ff3232'));
text(862, 1300, '2022/02/07/一', '#c8c8c8');
text(1729, 1301, '日线', '#c0c0c0');
$('dates').innerHTML = out.join('');

/* quote tables */
const cn = s => s.replace(/[万亿]/g, m => `<i>${m}</i>`);
const book = rows => rows.map(([n, p, v]) => `<tr><th class="c1">${n}</th><td class="p dn">${p}</td><td class="vol">${cn(v)}</td><td class="c0"></td></tr>`).join('');
$('sell').innerHTML = book([['卖五￥','6.10','8.1万'],['卖四','6.09','10.7万'],['卖三','6.08','2.2万'],['卖二','6.07','8.9万'],['卖一','6.06','32.2万']]);
$('buy').innerHTML = book([['买一','6.05','3.3万'],['买二','6.04','60.2万'],['买三','6.03','57.6万'],['买四','6.02','13.2万'],['买五','6.01','18.2万']]);
const st = rows => rows.map(([a, b, bc, c, d, dc]) => `<tr><th class="c1">${a}</th><td class="c2 ${bc}">${b}</td><th class="c3 lab2">${c}</th><td class="${dc}">${cn(d)}</td><td class="c0"></td></tr>`).join('');
$('stats').innerHTML = st([['今开','6.26','up','均价','6.21','up'],['最高','6.46','up','量比','1.21','up'],['最低','6.03','dn','市值','13.9亿',''],['现量','1869','pu','总量','95278',''],['外盘','35380','up','内盘','59898','dn']]);
$('stats2').innerHTML = st([['换手','4.14%','','股本','2.30亿',''],['净资','1.89','','流通','2.30亿',''],['收益㈠','0.001','','PE(动)','2851.4','']]);
$('flow').innerHTML = [['净流入额',11,'-1507万','-25%','dn'],['大宗流入',2,'1.2万','0%','up'],['5日净流入额',36,'-4842万','-18%','dn'],['5日大宗流入',5,'-606.4万','-2%','dn']]
  .map(([n, w, v, p, c]) => `<tr><th class="f1">${n.replace('5', '<span class="lead">5</span>')}</th><td class="f2"><svg viewBox="0 0 40 9"><rect width="${w}" height="9" fill="${c === 'dn' ? '#0f0' : '#ff3232'}"/></svg></td><td class="f3 ${c}">${cn(v)}</td><td class="${c}">${p}</td><td class="c0"></td></tr>`).join('');
$('ticks').innerHTML = `14:55 6.05 5.0万 B 3|14:55 6.05 2.8万 B 1|14:55 6.04 8.4万 S 7|14:55 6.04 6.0万 S 8|14:56 6.04 17.0万 S 8|14:56 6.04 14.6万 S 4|14:56 6.04 7.6万 S 6|14:56 6.04 0.4万 S 1|14:56 6.04 0.8万 S 2|14:56 6.04 2.1万 S 8|14:56 6.04 1.6万 S 3|14:56 6.04 0.5万 S 3|14:56 6.05 0.2万 B 1|14:56 6.04 3.1万 S 2|14:56 6.05 0.7万 B 2|14:56 6.05 0.8万 B 1|14:56 6.05 1.0万 B 2|14:56 6.04 17.5万 S 2|14:56 6.04 8.3万 S 2|14:57 6.04 0.5万 S 1|15:00 6.05 113.1万 - 60`
  .split('|').map(r => r.split(' ')).map(([t, p, v, d, n]) => `<tr><th class="c1">${t}</th><td class="t2 dn">${p}</td><td class="t3 ${d === '-' ? 'pu' : 'vol'}">${cn(v)}</td><td class="t4 ${d === 'B' ? 'up' : 'dn'}">${d === '-' ? '' : d}</td><td class="mute">${n}</td><td class="c0"></td></tr>`).join('');
```
